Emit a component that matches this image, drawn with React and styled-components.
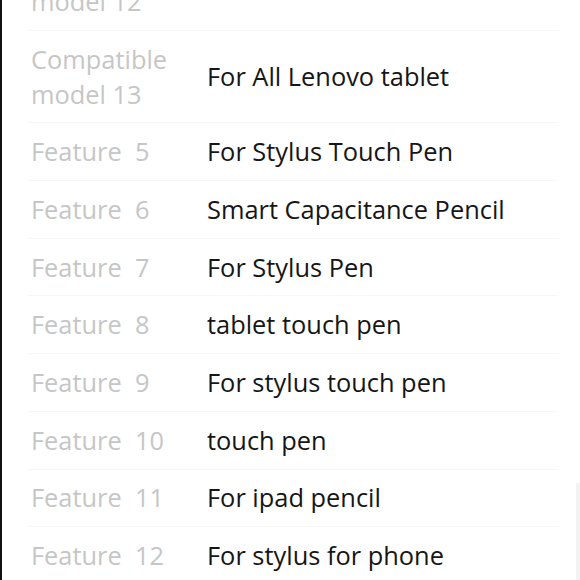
import React from "react";
import styled, { createGlobalStyle } from "styled-components";

const GlobalStyle = createGlobalStyle`
  html, body {
    margin: 0;
    padding: 0;
    background: #ffffff;
    overflow: hidden;
  }
  body {
    font-family: "Open Sans", "Liberation Sans", sans-serif;
  }
`;

const SPECS = [
  ["Compatible model 12", "For All Lenovo tablet"],
  ["Compatible model 13", "For All Lenovo tablet"],
  ["Feature\u00a0 5", "For Stylus Touch Pen"],
  ["Feature\u00a0 6", "Smart Capacitance Pencil"],
  ["Feature\u00a0 7", "For Stylus Pen"],
  ["Feature\u00a0 8", "tablet touch pen"],
  ["Feature\u00a0 9", "For stylus touch pen"],
  ["Feature\u00a0 10", "touch pen"],
  ["Feature\u00a0 11", "For ipad pencil"],
  ["Feature\u00a0 12", "For stylus for phone"],
];

const Page = styled.div`
  position: relative;
  height: 580px;
  border-left: 2px solid #111111;
  overflow: hidden;
`;

const Table = styled.div`
  margin: -62px 22px 0 26px;
`;

const Row = styled.div`
  display: grid;
  grid-template-columns: 179px 1fr;
  align-items: center;
  padding: 10.85px 0;
  border-bottom: 1px solid #f7f7f7;
  font-size: 25.4px;
  line-height: 35px;
`;

const Label = styled.div`
  padding-left: 3px;
  padding-right: 8px;
  color: #c6c6c6;
`;

const Value = styled.div`
  color: #161616;
`;

const Scrollbar = styled.div`
  position: absolute;
  right: 0;
  top: 483px;
  bottom: 0;
  width: 4px;
  background: #f3f3f3;
`;

export default function App() {
  return (
    <>
      <GlobalStyle />
      <Page>
        <Table>
          {SPECS.map(([label, value]) => (
            <Row key={label}>
              <Label>{label}</Label>
              <Value>{value}</Value>
            </Row>
          ))}
        </Table>
        <Scrollbar />
      </Page>
    </>
  );
}
